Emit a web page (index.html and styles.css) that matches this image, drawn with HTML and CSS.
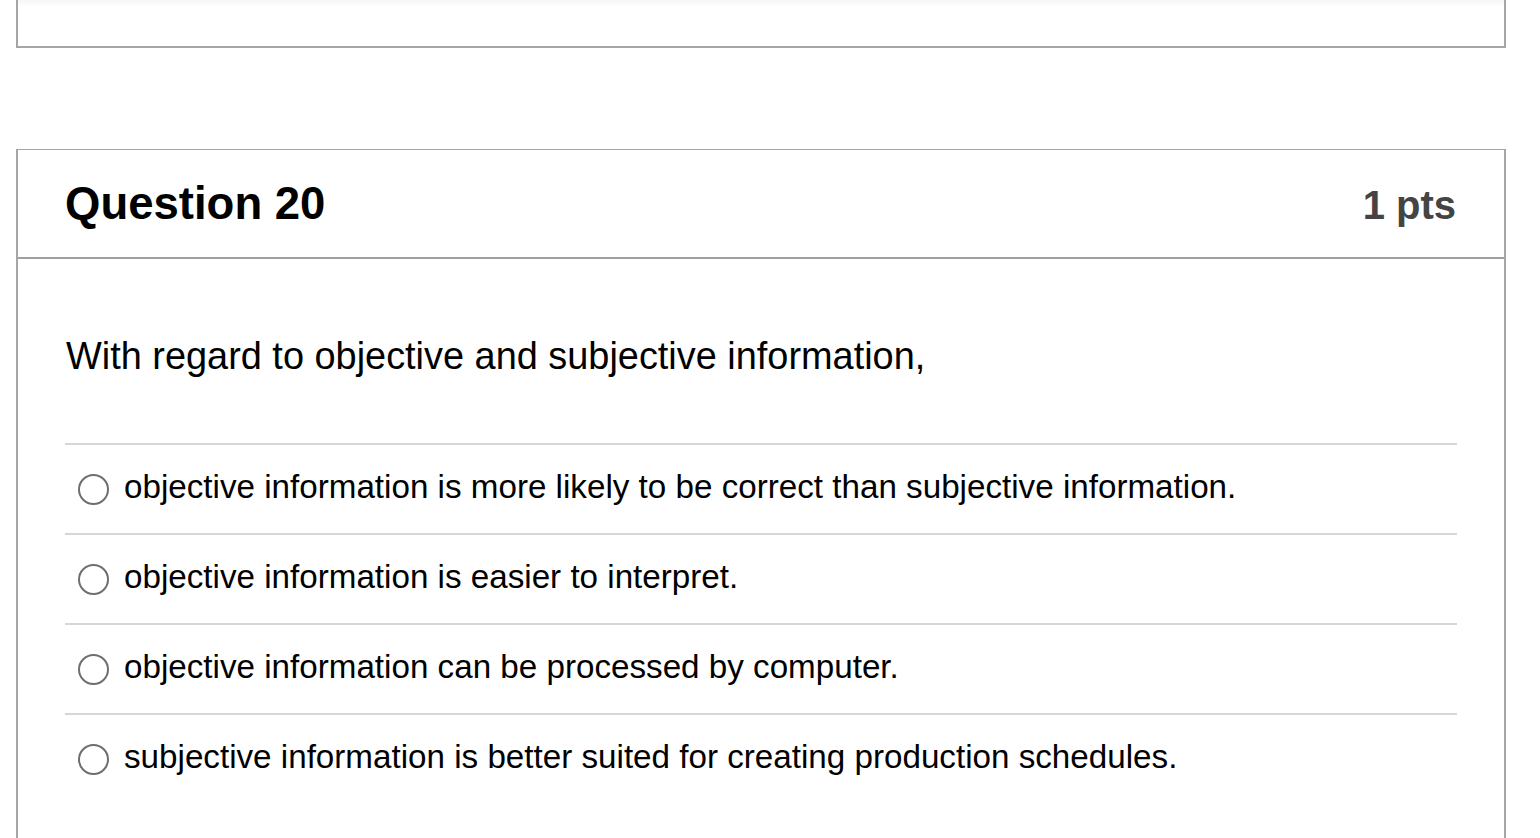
FILE: index.html
```html
<!DOCTYPE html>
<html lang="en">
<head>
<meta charset="utf-8">
<title>Question 20</title>
<link rel="stylesheet" href="styles.css">
</head>
<body>
<div class="page">
  <div class="prev-card"></div>
  <div class="question-card">
    <div class="q-header">
      <h2 class="q-title">Question 20</h2>
      <span class="q-points">1 pts</span>
    </div>
    <div class="q-body">
      <p class="q-text">With regard to objective and subjective information,</p>
      <div class="answers">
        <label class="answer"><span class="radio"></span><span class="answer-text">objective information is more likely to be correct than subjective information.</span></label>
        <label class="answer"><span class="radio"></span><span class="answer-text">objective information is easier to interpret.</span></label>
        <label class="answer"><span class="radio"></span><span class="answer-text">objective information can be processed by computer.</span></label>
        <label class="answer"><span class="radio"></span><span class="answer-text">subjective information is better suited for creating production schedules.</span></label>
      </div>
    </div>
  </div>
</div>
</body>
</html>
```

FILE: styles.css
```css
html, body {
  margin: 0;
  padding: 0;
  background: #ffffff;
  font-family: "Liberation Sans", Arial, sans-serif;
  color: #000000;
}

.page {
  width: 1490px;
  margin-left: 16px;
  height: 838px;
  overflow: hidden;
}

.prev-card {
  height: 46px;
  border: 2px solid #a5a5a5;
  border-top: none;
  background: linear-gradient(#f6f6f6, #ffffff 6px);
}

.question-card {
  margin-top: 101px;
  border: 2px solid #a5a5a5;
  border-top: 1px solid #a5a5a5;
}

.q-header {
  height: 109px;
  box-sizing: border-box;
  display: flex;
  align-items: center;
  justify-content: space-between;
  padding: 0 48px 0 47px;
  border-bottom: 2px solid #a0a0a0;
}

.q-title {
  margin: 0;
  font-size: 45.5px;
  font-weight: bold;
  line-height: 1;
  color: #000;
}

.q-points {
  font-size: 40px;
  font-weight: bold;
  color: #444444;
  line-height: 1;
  margin-top: 2px;
}

.q-body {
  padding: 75px 47px 120px 47px;
}

.q-text {
  margin: 0;
  font-size: 37.9px;
  line-height: 44px;
  padding-left: 1px;
}

.answers {
  margin-top: 65px;
}

.answer {
  display: flex;
  align-items: center;
  height: 90px;
  box-sizing: border-box;
  border-top: 2px solid #d6d6d6;
  padding-left: 13px;
}

.radio {
  width: 31px;
  height: 31px;
  box-sizing: border-box;
  border: 2px solid #6e6e6e;
  border-radius: 50%;
  flex: none;
  margin-right: 15px;
}

.answer-text {
  font-size: 33.2px;
  line-height: 40px;
  margin-bottom: 4px;
}
```
